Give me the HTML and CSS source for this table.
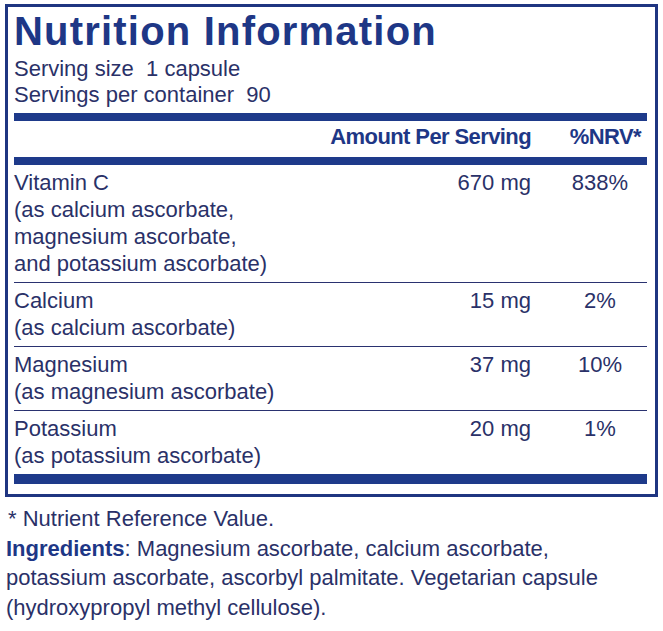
FILE: index.html
```html
<!DOCTYPE html>
<html lang="en">
<head>
<meta charset="utf-8">
<title>Nutrition Information</title>
<link rel="stylesheet" href="styles.css">
</head>
<body>
<div class="label">
  <h1 class="title">Nutrition Information</h1>
  <div class="serving">
    <div>Serving size&nbsp; 1 capsule</div>
    <div>Servings per container&nbsp; 90</div>
  </div>
  <div class="bar"></div>
  <div class="row head">
    <div class="name"></div>
    <div class="amt">Amount Per Serving</div>
    <div class="nrv">%NRV*</div>
  </div>
  <div class="bar"></div>
  <div class="row">
    <div class="name">Vitamin C<br>(as calcium ascorbate,<br>magnesium ascorbate,<br>and potassium ascorbate)</div>
    <div class="amt">670 mg</div>
    <div class="nrv">838%</div>
  </div>
  <div class="rule"></div>
  <div class="row">
    <div class="name">Calcium<br>(as calcium ascorbate)</div>
    <div class="amt">15 mg</div>
    <div class="nrv">2%</div>
  </div>
  <div class="rule"></div>
  <div class="row">
    <div class="name">Magnesium<br>(as magnesium ascorbate)</div>
    <div class="amt">37 mg</div>
    <div class="nrv">10%</div>
  </div>
  <div class="rule"></div>
  <div class="row">
    <div class="name">Potassium<br>(as potassium ascorbate)</div>
    <div class="amt">20 mg</div>
    <div class="nrv">1%</div>
  </div>
  <div class="bar bar-bottom"></div>
</div>
<div class="notes">
  <p>* Nutrient Reference Value.</p>
  <p><strong>Ingredients</strong>: Magnesium ascorbate, calcium ascorbate, potassium ascorbate, ascorbyl palmitate. Vegetarian capsule (hydroxypropyl methyl cellulose).</p>
</div>
</body>
</html>
```
FILE: styles.css
```css
html, body {
  margin: 0;
  padding: 0;
  background: #ffffff;
}
body {
  font-family: "Liberation Sans", Arial, sans-serif;
  color: #2a3168;
  font-size: 22px;
}
.label {
  margin: 4px 0 0 5px;
  width: 653px;
  border: 3px solid #1f3581;
  padding: 4px 8px 10px 6px;
  box-sizing: border-box;
}
.title {
  margin: 0;
  font-size: 40px;
  line-height: 40px;
  font-weight: 700;
  letter-spacing: 1.2px;
  color: #1e3786;
}
.serving {
  margin-top: 5px;
  line-height: 26px;
  padding-bottom: 5px;
}
.bar {
  height: 8px;
  background: #1e3a8a;
}
.bar-bottom {
  height: 10px;
}
.rule {
  height: 1px;
  background: #2a3270;
}
.row {
  display: grid;
  grid-template-columns: 1fr 230px 116px;
  line-height: 27px;
  padding: 4px 0 5px;
}
.row .amt {
  text-align: right;
  white-space: nowrap;
}
.row .nrv {
  text-align: center;
  padding-left: 22px;
  white-space: nowrap;
}
.row.head {
  padding: 3px 0 7px;
  line-height: 26px;
  font-weight: 700;
  letter-spacing: -0.6px;
  color: #1e3786;
}
.row.head .nrv {
  text-align: right;
  padding-left: 0;
  padding-right: 6px;
}
.notes {
  margin: 0 0 0 6px;
  width: 625px;
  line-height: 29.5px;
}
.notes p {
  margin: 0;
}
.notes p:first-child {
  margin-top: 7px;
  padding-left: 2px;
}
.notes strong {
  color: #1e3786;
}
```
